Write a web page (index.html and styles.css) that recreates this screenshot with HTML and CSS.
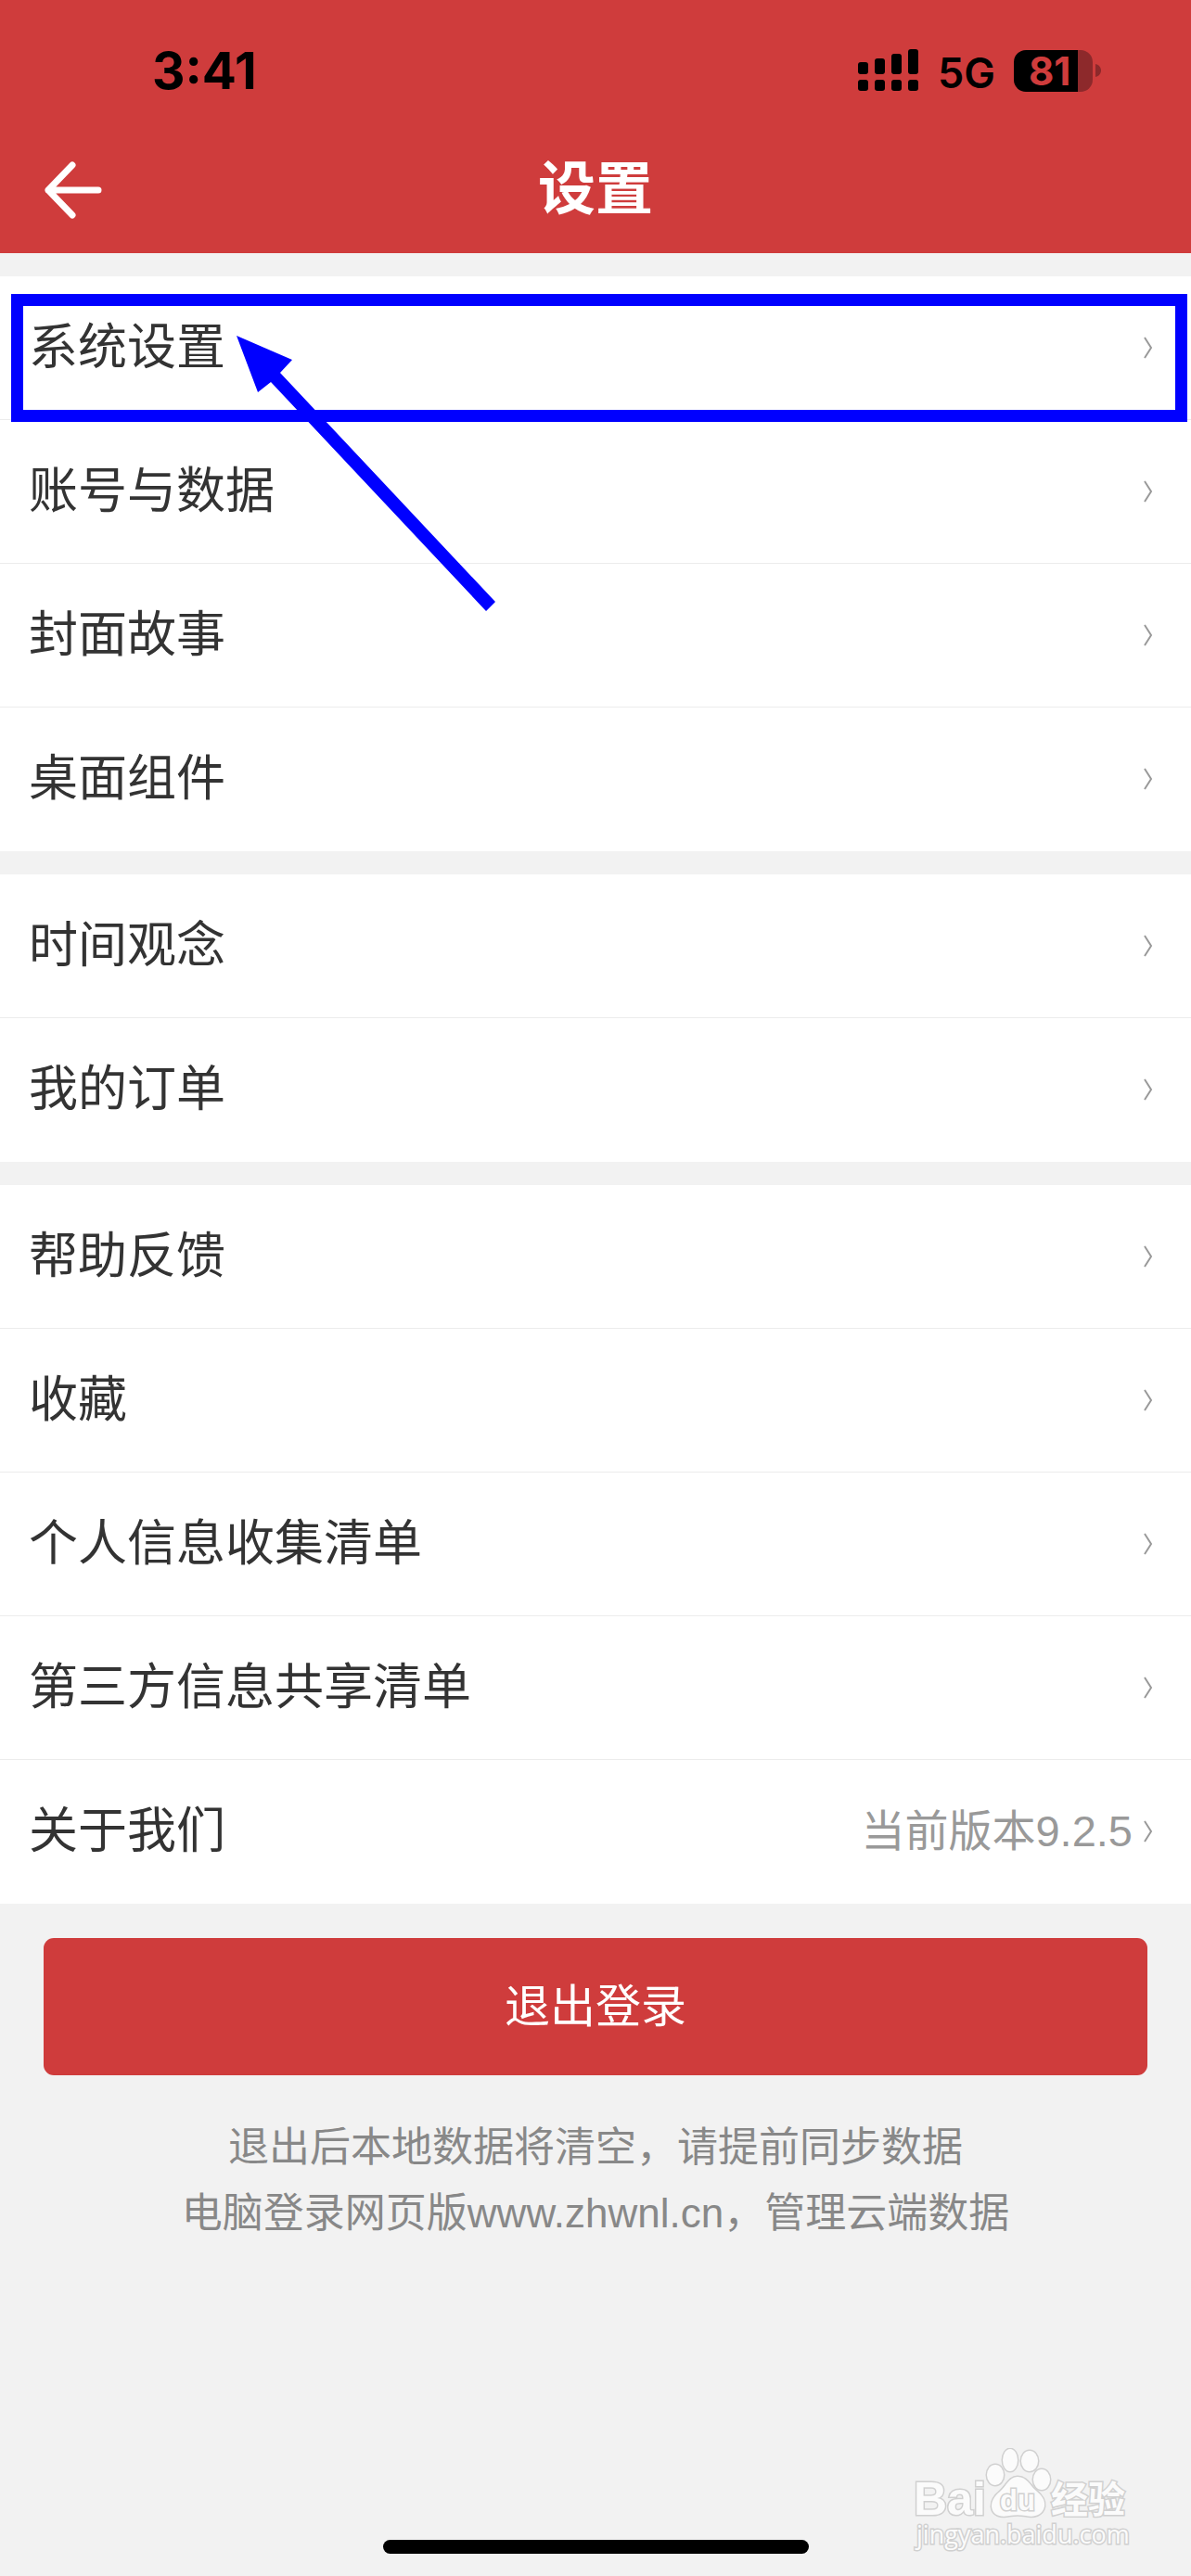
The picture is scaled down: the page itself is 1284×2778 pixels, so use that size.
FILE: index.html
```html
<!DOCTYPE html>
<html lang="zh-CN">
<head>
    <meta charset="UTF-8">
    <meta name="viewport" content="width=device-width, initial-scale=1.0">
    <title>设置</title>
    <link rel="stylesheet" href="styles.css">
</head>
<body>
    <header class="header">
        <div class="status-bar">
            <span class="time">3:41</span>
            <div class="status-icons">
                <svg class="signal" width="66" height="46" viewBox="0 0 66 46">
                    <rect x="0" y="14" width="11" height="13" rx="3"/>
                    <rect x="18" y="10" width="11" height="17" rx="3"/>
                    <rect x="36" y="5" width="11" height="22" rx="3"/>
                    <rect x="54" y="0" width="11" height="27" rx="3"/>
                    <rect x="0" y="33" width="11" height="12" rx="3"/>
                    <rect x="18" y="33" width="11" height="12" rx="3"/>
                    <rect x="36" y="33" width="11" height="12" rx="3"/>
                    <rect x="54" y="33" width="11" height="12" rx="3"/>
                </svg>
                <span class="network">5G</span>
                <div class="battery"><span class="battery-level">81</span></div>
                <svg class="battery-tip" width="6" height="14" viewBox="0 0 6 14">
                    <path d="M0 0C8 2 8 12 0 14Z"/>
                </svg>
            </div>
        </div>
        <div class="nav-bar">
            <a class="back" href="#" aria-label="返回">
                <svg width="62" height="62" viewBox="0 0 62 62">
                    <path d="M30 4L4 31L30 58M4 31H58"/>
                </svg>
            </a>
            <h1>设置</h1>
        </div>
    </header>

    <main>
        <nav class="group">
            <div class="marked">
                <a class="row" href="#">系统设置<svg class="chevron" viewBox="0 0 10 24"><path d="M1 1L8 12L1 23"/></svg></a>
                <div class="mark-box"></div>
                <svg class="mark-arrow" width="280" height="298" viewBox="0 0 280 298">
                    <polygon points="0,0 60,26 47,40 279,287 269,297 37,50 23,61"/>
                </svg>
            </div>
            <a class="row" href="#">账号与数据<svg class="chevron" viewBox="0 0 10 24"><path d="M1 1L8 12L1 23"/></svg></a>
            <a class="row" href="#">封面故事<svg class="chevron" viewBox="0 0 10 24"><path d="M1 1L8 12L1 23"/></svg></a>
            <a class="row" href="#">桌面组件<svg class="chevron" viewBox="0 0 10 24"><path d="M1 1L8 12L1 23"/></svg></a>
        </nav>

        <nav class="group">
            <a class="row" href="#">时间观念<svg class="chevron" viewBox="0 0 10 24"><path d="M1 1L8 12L1 23"/></svg></a>
            <a class="row" href="#">我的订单<svg class="chevron" viewBox="0 0 10 24"><path d="M1 1L8 12L1 23"/></svg></a>
        </nav>

        <nav class="group">
            <a class="row" href="#">帮助反馈<svg class="chevron" viewBox="0 0 10 24"><path d="M1 1L8 12L1 23"/></svg></a>
            <a class="row" href="#">收藏<svg class="chevron" viewBox="0 0 10 24"><path d="M1 1L8 12L1 23"/></svg></a>
            <a class="row" href="#">个人信息收集清单<svg class="chevron" viewBox="0 0 10 24"><path d="M1 1L8 12L1 23"/></svg></a>
            <a class="row" href="#">第三方信息共享清单<svg class="chevron" viewBox="0 0 10 24"><path d="M1 1L8 12L1 23"/></svg></a>
            <a class="row" href="#">关于我们<span class="version">当前版本9.2.5</span><svg class="chevron" viewBox="0 0 10 24"><path d="M1 1L8 12L1 23"/></svg></a>
        </nav>

        <div class="logout">
            <button type="button">退出登录</button>
            <p>退出后本地数据将清空，请提前同步数据<br>电脑登录网页版www.zhwnl.cn，管理云端数据</p>
        </div>
    </main>

    <svg class="watermark" width="236" height="116" viewBox="0 0 236 116">
        <text class="wm-logo" x="1" y="72">Bai</text>
        <ellipse cx="89" cy="29" rx="9" ry="11"/>
        <ellipse cx="105" cy="13" rx="8" ry="12"/>
        <ellipse cx="126" cy="14" rx="9" ry="11"/>
        <ellipse cx="139" cy="34" rx="9" ry="11"/>
        <path d="M113 31C123 31 126 40 133 46C139 51 143 56 142 63C140 73 130 75 122 73C116 72 110 72 104 73C95 75 86 73 85 63C85 56 89 51 94 47C101 41 104 31 113 31Z"/>
        <text class="wm-du" x="94" y="67">du</text>
        <text class="wm-cn" x="149" y="70">经验</text>
        <text class="wm-url" x="4" y="103">jingyan.baidu.com</text>
    </svg>
    <div class="home-indicator"></div>
</body>
</html>
```

FILE: styles.css
```css
* {
    box-sizing: border-box;
}
body {
    margin: 0;
    min-height: 100vh;
    display: flex;
    flex-direction: column;
    position: relative;
    background-color: #f2f2f2;
    color: #333;
    font-family: "Liberation Sans", "Noto Sans CJK SC", sans-serif;
}
.header {
    background-color: #cf3c3c;
}
.status-bar {
    display: flex;
    justify-content: space-between;
    align-items: center;
    height: 136px;
    padding: 16px 97px 0 164px;
    color: #000;
    font-family: Inter, sans-serif;
}
.time {
    font-size: 55px;
    font-weight: 700;
}
.status-icons {
    display: flex;
    align-items: center;
}
.network {
    margin: 4px 20px 0 20px;
    font-size: 45px;
    font-weight: 600;
}
.battery {
    width: 85px;
    height: 45px;
    padding-left: 16px;
    border-radius: 13px;
    background: linear-gradient(to right, #000 69px, #8d292b 69px);
}
.battery-level {
    color: #cf3c3c;
    font-size: 42px;
    font-weight: 700;
    line-height: 45px;
}
.battery-tip {
    margin-left: 3px;
    fill: #8d292b;
}
.nav-bar {
    display: grid;
    grid-template-columns: 1fr auto 1fr;
    align-items: center;
    height: 137px;
    padding: 0 48px;
}
.back svg {
    display: block;
    fill: none;
    stroke: #fff;
    stroke-width: 7;
    stroke-linecap: round;
    stroke-linejoin: round;
}
h1 {
    margin: 0;
    color: #fff;
    font-size: 62px;
    font-weight: 700;
    line-height: 80px;
}
.group {
    margin-top: 25px;
    background-color: #fff;
}
.row {
    display: flex;
    align-items: center;
    height: 155px;
    padding: 0 41px 0 31px;
    border-bottom: 1px solid #ececec;
    color: #333;
    font-size: 53px;
    line-height: 60px;
    text-decoration: none;
}
.row:last-child {
    border-bottom-color: #fff;
}
.chevron {
    width: 10px;
    height: 24px;
    margin-left: auto;
    fill: none;
    stroke: #999;
    stroke-width: 2;
}
.version {
    margin-left: auto;
    color: #999;
    font-size: 47px;
}
.version + .chevron {
    margin-left: 12px;
}
.marked {
    position: relative;
}
.marked .row {
    border-bottom-color: #ececec;
}
.mark-box {
    position: absolute;
    top: 19px;
    left: 12px;
    right: 4px;
    height: 138px;
    border: 13px solid #00f;
    pointer-events: none;
}
.mark-arrow {
    position: absolute;
    top: 64px;
    left: 255px;
    z-index: 1;
    fill: #00f;
    pointer-events: none;
}
.logout {
    padding: 37px 47px 0;
    text-align: center;
}
.logout button {
    display: block;
    width: 100%;
    height: 148px;
    border: none;
    border-radius: 11px;
    background-color: #cf3c3c;
    color: #fff;
    font-family: inherit;
    font-size: 49px;
    line-height: 60px;
    cursor: pointer;
}
.logout p {
    margin: 42px 0 0;
    color: #888;
    font-size: 44px;
    line-height: 71px;
}
.watermark {
    position: absolute;
    right: 64px;
    bottom: 22px;
    fill: #fbfbfb;
    stroke: #d0d0d0;
    stroke-width: 3;
    paint-order: stroke;
}
.wm-logo {
    font: 700 50px "Liberation Sans", sans-serif;
}
.wm-du {
    font: 700 31px "Liberation Sans", sans-serif;
}
.wm-cn {
    font: 700 40px "Noto Sans CJK SC", sans-serif;
}
.wm-url {
    font: 400 27px "Open Sans", sans-serif;
}
.home-indicator {
    width: 459px;
    height: 15px;
    margin: auto auto 24px;
    border-radius: 8px;
    background-color: #000;
}
```
